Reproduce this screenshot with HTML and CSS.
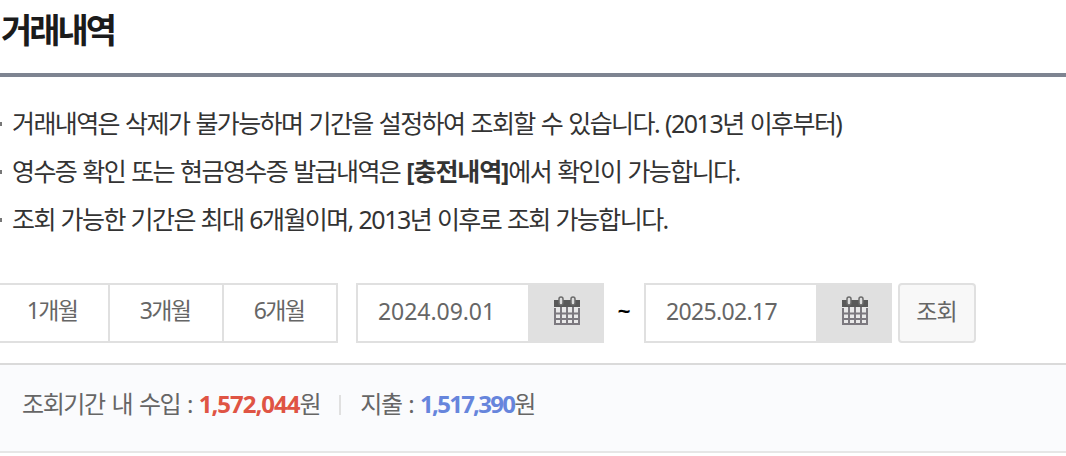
FILE: index.html
```html
<!doctype html>
<html lang="ko">
<head>
    <meta charset="UTF-8">
    <title>거래내역</title>
    <link rel="stylesheet" href="styles.css">
</head>
<body>
<div class="wrapper">
    <h1 class="title">거래내역</h1>
    <ul class="notice">
        <li>거래내역은 삭제가 불가능하며 기간을 설정하여 조회할 수 있습니다. (<span class="notice__num">2013</span>년 이후부터)</li>
        <li>영수증 확인 또는 현금영수증 발급내역은 <strong>[충전내역]</strong>에서 확인이 가능합니다.</li>
        <li>조회 가능한 기간은 최대 <span class="notice__num">6</span>개월이며, <span class="notice__num">2013</span>년 이후로 조회 가능합니다.</li>
    </ul>
    <div class="search">
        <div class="period">
            <a class="period__item">1개월</a>
            <a class="period__item">3개월</a>
            <a class="period__item">6개월</a>
        </div>
        <div class="date">
            <span class="date__value">2024.09.01</span>
            <span class="date__btn">
                <svg class="icon" width="28" height="30" viewBox="0 0 28 30">
                    <path class="icon__page" d="M1 5h26v24H1z"/>
                    <path class="icon__line" d="M2 12v16h24V12M2 17.5h24M2 23h24M8 11v17M14 11v17M20 11v17"/>
                    <path class="icon__head" d="M1 4h26v7H1z"/>
                    <rect class="icon__ring" x="6" y="1" width="4" height="8" rx="2"/>
                    <rect class="icon__ring" x="18" y="1" width="4" height="8" rx="2"/>
                </svg>
            </span>
        </div>
        <span class="search__tilde">~</span>
        <div class="date date--end">
            <span class="date__value">2025.02.17</span>
            <span class="date__btn">
                <svg class="icon" width="28" height="30" viewBox="0 0 28 30">
                    <path class="icon__page" d="M1 5h26v24H1z"/>
                    <path class="icon__line" d="M2 12v16h24V12M2 17.5h24M2 23h24M8 11v17M14 11v17M20 11v17"/>
                    <path class="icon__head" d="M1 4h26v7H1z"/>
                    <rect class="icon__ring" x="6" y="1" width="4" height="8" rx="2"/>
                    <rect class="icon__ring" x="18" y="1" width="4" height="8" rx="2"/>
                </svg>
            </span>
        </div>
        <button class="search__btn">조회</button>
    </div>
    <div class="summary">
        <span class="summary__item">조회기간 내 수입 : <strong class="summary__in">1,572,044</strong>원</span>
        <span class="summary__item">지출 : <strong class="summary__out">1,517,390</strong>원</span>
    </div>
</div>
</body>
</html>
```
FILE: styles.css
```css
body{margin:0;background:#fff;overflow:hidden;font-family:'Noto Sans','Noto Sans CJK KR',sans-serif;color:#333}
.title{box-sizing:border-box;height:77px;margin:0;padding-left:1px;border-bottom:4px solid #7e8491;font-size:34px;line-height:60px;letter-spacing:-3px;color:#1b1b1b}
.notice{margin:0;padding:22px 0 0;list-style:none}
.notice li{display:flex;align-items:center;height:48px;font-size:25px;line-height:48px;letter-spacing:-1.6px;word-spacing:1.2px;white-space:pre}
.notice li:before{content:'';width:2px;height:4px;margin:2px 10px 0 0;background:#777}
.notice li:last-child{word-spacing:.9px}
.notice strong{letter-spacing:-1.1px}
.notice__num{letter-spacing:-1.5px}
.search{display:flex;height:60px;margin-top:40px;font-size:23px;color:#666}
.period{display:flex}
.period__item{box-sizing:border-box;width:114px;height:60px;padding-right:2px;border:solid #e0e0e0;border-width:2px 2px 2px 0;line-height:51px;letter-spacing:-1.7px;text-align:center}
.period__item:first-child{width:110px;padding-right:4px}
.date{box-sizing:border-box;display:flex;width:248px;height:60px;margin-left:18px;border:2px solid #e0e0e0}
.date__value{width:150px;padding-left:20px;line-height:53px;letter-spacing:-.05px}
.date__btn{flex:1;padding:11px 0 0 25px;background:#e0e0e0}
.icon{display:block}
.icon__page{fill:#e9e9e9}
.icon__line{fill:none;stroke:#7c797f;stroke-width:2}
.icon__head{fill:#595959}
.icon__ring{fill:#ddd;stroke:#6b6b6b;stroke-width:1.5}
.search__tilde{width:40px;line-height:56px;font-weight:600;text-align:center;color:#000}
.date--end{margin-left:0}
.date--end .date__value{letter-spacing:-.65px}
.search__btn{box-sizing:border-box;width:78px;height:60px;margin-left:6px;padding:0 1px 6px 0;border:2px solid #e0e0e0;border-radius:4px;background:#f8f8f8;font:inherit;letter-spacing:-.8px;color:#666}
.summary{box-sizing:border-box;display:flex;height:90px;margin-top:20px;padding-left:22px;border:solid #dadada;border-width:2px 0;border-bottom-color:#e6e6e6;background:#fafbfd;font-size:24px;line-height:77px;letter-spacing:-1.4px;color:#666}
.summary__item{display:flex;align-items:center;height:77px;word-spacing:1.9px;white-space:pre}
.summary__item + .summary__item:before{content:'';width:2px;height:20px;margin:3px 19px 0 19px;background:#e0e0e0}
.summary__in{letter-spacing:-1px;color:#df5444}
.summary__out{letter-spacing:-1.75px;color:#6685dc}
```
